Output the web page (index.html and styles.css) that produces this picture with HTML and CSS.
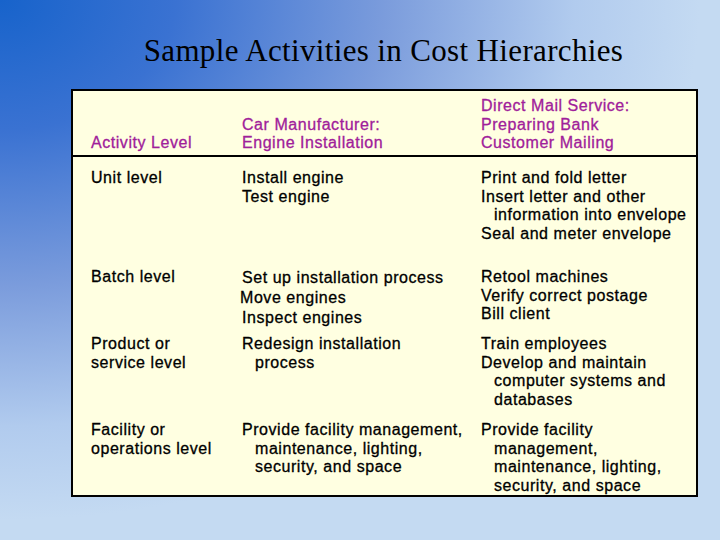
FILE: index.html
```html
<!DOCTYPE html>
<html>
<head>
<meta charset="utf-8">
<link rel="stylesheet" href="styles.css">
</head>
<body>
<div class="slide">
  <h1 class="title">Sample Activities in Cost Hierarchies</h1>
  <div class="table">
    <div class="row head">
      <div class="cell"><div>Activity Level</div></div>
      <div class="cell"><div>Car Manufacturer:</div><div>Engine Installation</div></div>
      <div class="cell top"><div>Direct Mail Service:</div><div>Preparing Bank</div><div>Customer Mailing</div></div>
    </div>
    <div class="row r-unit">
      <div class="cell"><div>Unit level</div></div>
      <div class="cell"><div>Install engine</div><div>Test engine</div></div>
      <div class="cell"><div>Print and fold letter</div><div>Insert letter and other</div><div class="ind">information into envelope</div><div>Seal and meter envelope</div></div>
    </div>
    <div class="row r-batch">
      <div class="cell"><div>Batch level</div></div>
      <div class="cell wide"><div>Set up installation process</div><div class="nudge">Move engines</div><div>Inspect engines</div></div>
      <div class="cell"><div>Retool machines</div><div>Verify correct postage</div><div>Bill client</div></div>
    </div>
    <div class="row r-product">
      <div class="cell"><div>Product or</div><div>service level</div></div>
      <div class="cell"><div>Redesign installation</div><div class="ind">process</div></div>
      <div class="cell"><div>Train employees</div><div>Develop and maintain</div><div class="ind">computer systems and</div><div class="ind">databases</div></div>
    </div>
    <div class="row r-facility">
      <div class="cell"><div>Facility or</div><div>operations level</div></div>
      <div class="cell"><div>Provide facility management,</div><div class="ind">maintenance, lighting,</div><div class="ind">security, and space</div></div>
      <div class="cell"><div>Provide facility</div><div class="ind">management,</div><div class="ind">maintenance, lighting,</div><div class="ind">security, and space</div></div>
    </div>
  </div>
</div>
</body>
</html>
```

FILE: styles.css
```css
html, body {
  margin: 0;
  padding: 0;
}
body {
  width: 720px;
  height: 540px;
  overflow: hidden;
  background-color: #c4daf2;
  background-image: radial-gradient(ellipse 700px 520px at 0 0, #1763cb 0%, #3a72d2 25%, #7b9cdc 55%, #b1cbee 82%, #c4daf2 100%);
}
.slide {
  width: 720px;
  height: 540px;
  display: flex;
  flex-direction: column;
}
.title {
  margin: 0;
  height: 89px;
  box-sizing: border-box;
  padding: 32px 0 0 47px;
  font-family: "Liberation Serif", "Times New Roman", serif;
  font-weight: normal;
  font-size: 31px;
  letter-spacing: 0.35px;
  line-height: 38px;
  text-align: center;
  color: #000;
}
.table {
  margin-left: 71px;
  width: 627px;
  height: 408px;
  box-sizing: border-box;
  border: 2px solid #000;
  background: #ffffe1;
  display: flex;
  flex-direction: column;
  font-family: "Liberation Sans", Arial, sans-serif;
  font-size: 16px;
  letter-spacing: 0.55px;
  -webkit-text-stroke: 0.3px currentColor;
  line-height: 18.5px;
  color: #000;
}
.row {
  display: grid;
  grid-template-columns: 151px 239px 233px;
  box-sizing: border-box;
  padding-top: 12px;
}
.cell {
  padding-left: 18px;
  white-space: nowrap;
}
.head {
  height: 66px;
  padding-top: 0;
  padding-bottom: 3px;
  border-bottom: 2px solid #000;
  color: #a0209a;
}
.head .cell {
  align-self: end;
}
.head .cell.top {
  align-self: start;
  padding-top: 6px;
}
.r-unit { height: 99px; }
.r-batch { height: 67px; }
.r-product { height: 86px; }
.r-facility { flex: 1; }
.wide { line-height: 20px; }
.ind { padding-left: 13px; }
.nudge { margin-left: -2px; }
```
